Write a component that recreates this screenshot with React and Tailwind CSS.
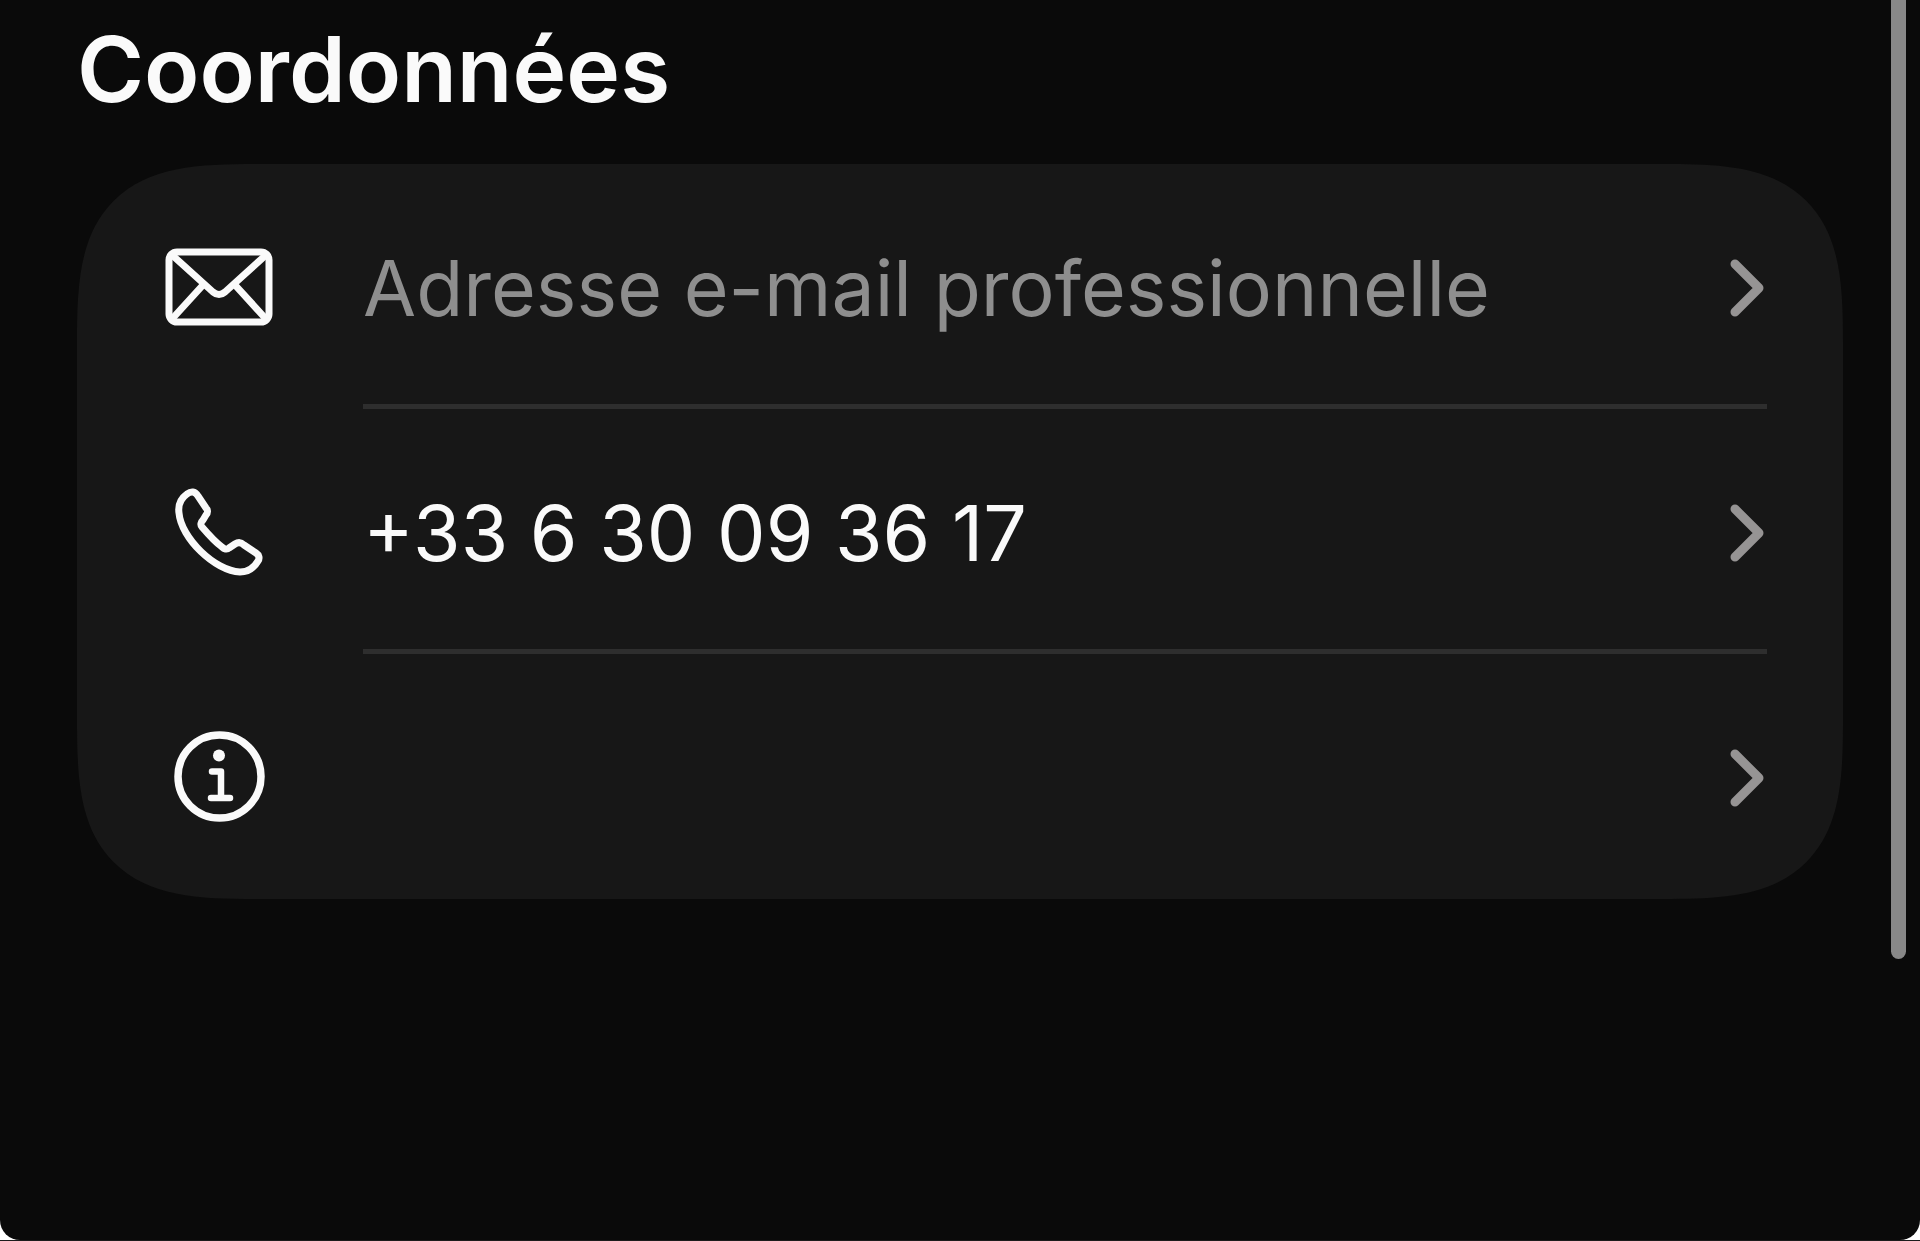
import React from 'react';

const MailIcon = () => (
    <svg width="108" height="78" viewBox="0 0 108 78" fill="none" stroke="currentColor" strokeWidth="7" strokeLinecap="round" strokeLinejoin="round" aria-hidden="true">
        <rect x="4" y="4" width="100" height="70" rx="8" />
        <path d="M7 7 L48 44 Q54 49 60 44 L101 7" />
        <path d="M38 37 L7 71 M70 37 L101 71" />
    </svg>
);

const PhoneIcon = () => (
    <svg width="88" height="88" viewBox="0 0 88 88" fill="none" stroke="currentColor" strokeWidth="7" strokeLinecap="round" strokeLinejoin="round" aria-hidden="true">
        <path d="M12 6 C5 11 3 18 4 25 C6 50 40 83 65 84 C74 84 79 80 83 73 C85 70 84 67 81 65 L69 57 C66 54 63 54 60 56 L54 60 C52 62 49 61 47 59 C40 54 33 46 27 39 C25 37 26 34 28 32 L31 27 C33 25 33 22 31 20 L23 8 C20 3 16 3 12 6 Z" />
    </svg>
);

const InfoIcon = () => (
    <svg width="92" height="92" viewBox="0 0 92 92" fill="none" stroke="currentColor" strokeLinecap="round" strokeLinejoin="round" aria-hidden="true">
        <circle cx="46.5" cy="45.5" r="41.5" strokeWidth="7.5" />
        <circle cx="46" cy="24.5" r="6" fill="currentColor" stroke="none" />
        <path d="M39 40.5 H48 V67 M38 67 H57" strokeWidth="6.5" />
    </svg>
);

const ChevronIcon = () => (
    <svg className="shrink-0 text-[#969494]" width="36" height="60" viewBox="0 0 36 60" fill="none" stroke="currentColor" strokeWidth="9" strokeLinecap="round" strokeLinejoin="round" aria-hidden="true">
        <path d="M6 6 L30 30 L6 54" />
    </svg>
);

const contacts = [
    { id: 'email', label: 'E-mail', text: 'Adresse e-mail professionnelle', filled: false, Icon: MailIcon },
    { id: 'phone', label: 'Téléphone', text: '+33 6 30 09 36 17', filled: true, Icon: PhoneIcon },
    { id: 'info', label: 'Informations', text: '', filled: false, Icon: InfoIcon },
];

const ContactRow = ({ item, last }) => {
    const { Icon, label, text, filled } = item;

    return (
        <li>
            <button type="button" aria-label={text || label} className="flex w-full items-stretch gap-[90px] pl-[88px] pr-[76px] text-left">
                <span className="flex w-[108px] shrink-0 items-center justify-center text-[#fafafa]">
                    <Icon />
                </span>
                <span className={`flex flex-1 items-center justify-between border-b-[5px] pt-[78px] pb-[70px] pr-[2px] ${last ? 'border-transparent' : 'border-[#2e2e2e]'}`}>
                    <span className={`min-h-[92px] text-[77px] leading-[92px] whitespace-nowrap ${filled ? 'text-[#fafafa]' : 'text-[#8e8e8e]'}`}>
                        {text}
                    </span>
                    <ChevronIcon />
                </span>
            </button>
        </li>
    );
};

const App = () => {
    return (
        <div className="border-b border-[#1c1c1c] bg-white font-['Inter',sans-serif]">
            <main className="relative min-h-[calc(100vh-1px)] rounded-b-[20px] bg-[#0a0a0a] px-[77px] pt-[14px]">
                <h1 className="text-[91px] leading-[110px] font-semibold text-[#fafafa]">Coordonnées</h1>

                {/* Contact card */}
                <ul className="mt-[40px] overflow-hidden rounded-[120px] bg-[#171717] supports-[corner-shape:squircle]:rounded-[180px] supports-[corner-shape:squircle]:[corner-shape:superellipse(1.6)]">
                    {contacts.map((item, i) => (
                        <ContactRow key={item.id} item={item} last={i === contacts.length - 1} />
                    ))}
                </ul>

                {/* Scroll thumb */}
                <div className="absolute top-0 right-[14px] h-[959px] w-[15px] rounded-b-full bg-[#888888]" />
            </main>
        </div>
    );
};

export default App;
